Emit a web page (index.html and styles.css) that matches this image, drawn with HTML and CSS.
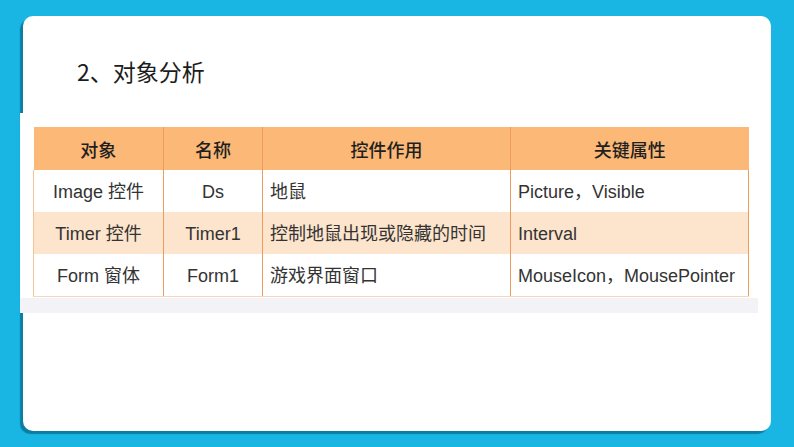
FILE: index.html
```html
<!DOCTYPE html>
<html lang="zh">
<head>
<meta charset="utf-8">
<link rel="stylesheet" href="styles.css">
</head>
<body>
<div class="card">
  <h1 class="title">2、对象分析</h1>
  <div class="figure">
    <table class="grid">
      <colgroup>
        <col class="c1"><col class="c2"><col class="c3"><col class="c4">
      </colgroup>
      <thead>
        <tr><th>对象</th><th>名称</th><th>控件作用</th><th>关键属性</th></tr>
      </thead>
      <tbody>
        <tr><td class="ctr">Image 控件</td><td class="ctr">Ds</td><td>地鼠</td><td>Picture，Visible</td></tr>
        <tr class="alt"><td class="ctr">Timer 控件</td><td class="ctr">Timer1</td><td>控制地鼠出现或隐藏的时间</td><td>Interval</td></tr>
        <tr><td class="ctr">Form 窗体</td><td class="ctr">Form1</td><td>游戏界面窗口</td><td>MouseIcon，MousePointer</td></tr>
      </tbody>
    </table>
    <div class="strip"></div>
  </div>
</div>
</body>
</html>
```

FILE: styles.css
```css
html, body {
  margin: 0;
  padding: 0;
}
body {
  background: #19b6e4;
  width: 794px;
  height: 447px;
  overflow: hidden;
  padding-top: 16px;
  box-sizing: border-box;
  font-family: "Liberation Sans", "Noto Sans CJK SC", sans-serif;
}
.card {
  margin-left: 23px;
  width: 748px;
  height: 415px;
  background: #ffffff;
  border-radius: 10px;
  box-shadow: -3px 3px 1px #0c7ea3;
  box-sizing: border-box;
  padding-top: 40px;
}
.title {
  margin: 0 0 0 54px;
  height: 57px;
  font-family: "Noto Sans CJK SC", sans-serif;
  font-weight: 400;
  font-size: 23px;
  line-height: 30px;
  color: #1c1c1c;
}
.figure {
  position: relative;
  margin-left: -3px;
  width: 738px;
  height: 200px;
  background: #ffffff;
  padding: 14px 0 0 13px;
  box-sizing: border-box;
  overflow: hidden;
}
.grid {
  border-collapse: collapse;
  table-layout: fixed;
  width: 715px;
  color: #333333;
  font-size: 18px;
}
.c1 { width: 130px; }
.c2 { width: 99px; }
.c3 { width: 248px; }
.c4 { width: 238px; }
.grid th {
  background: #fbb877;
  height: 42px;
  padding: 1px 0 0;
  font-family: "Noto Sans CJK SC", sans-serif;
  font-weight: 500;
  font-size: 18px;
  line-height: 1;
  color: #1f1f1f;
  border-left: 1px solid #ec9c5c;
}
.grid th:first-child { border-left: none; }
.grid td {
  height: 40px;
  padding: 2px 0 0 7px;
  line-height: 1;
  vertical-align: middle;
  border-left: 1px solid #ec9c5c;
  white-space: nowrap;
}
.grid td:first-child { border-left: 1px solid #f3c49a; }
.grid td:last-child { border-right: 1px solid #ec9c5c; }
.grid td.ctr { text-align: center; padding: 2px 0 0; }
.grid tbody tr:last-child td { border-bottom: 1px solid #f8d6b8; }
.grid tr.alt td { background: #fde4cc; }
.strip {
  position: absolute;
  left: 0;
  right: 0;
  bottom: 0;
  height: 15px;
  background: #f3f3f7;
}
```
